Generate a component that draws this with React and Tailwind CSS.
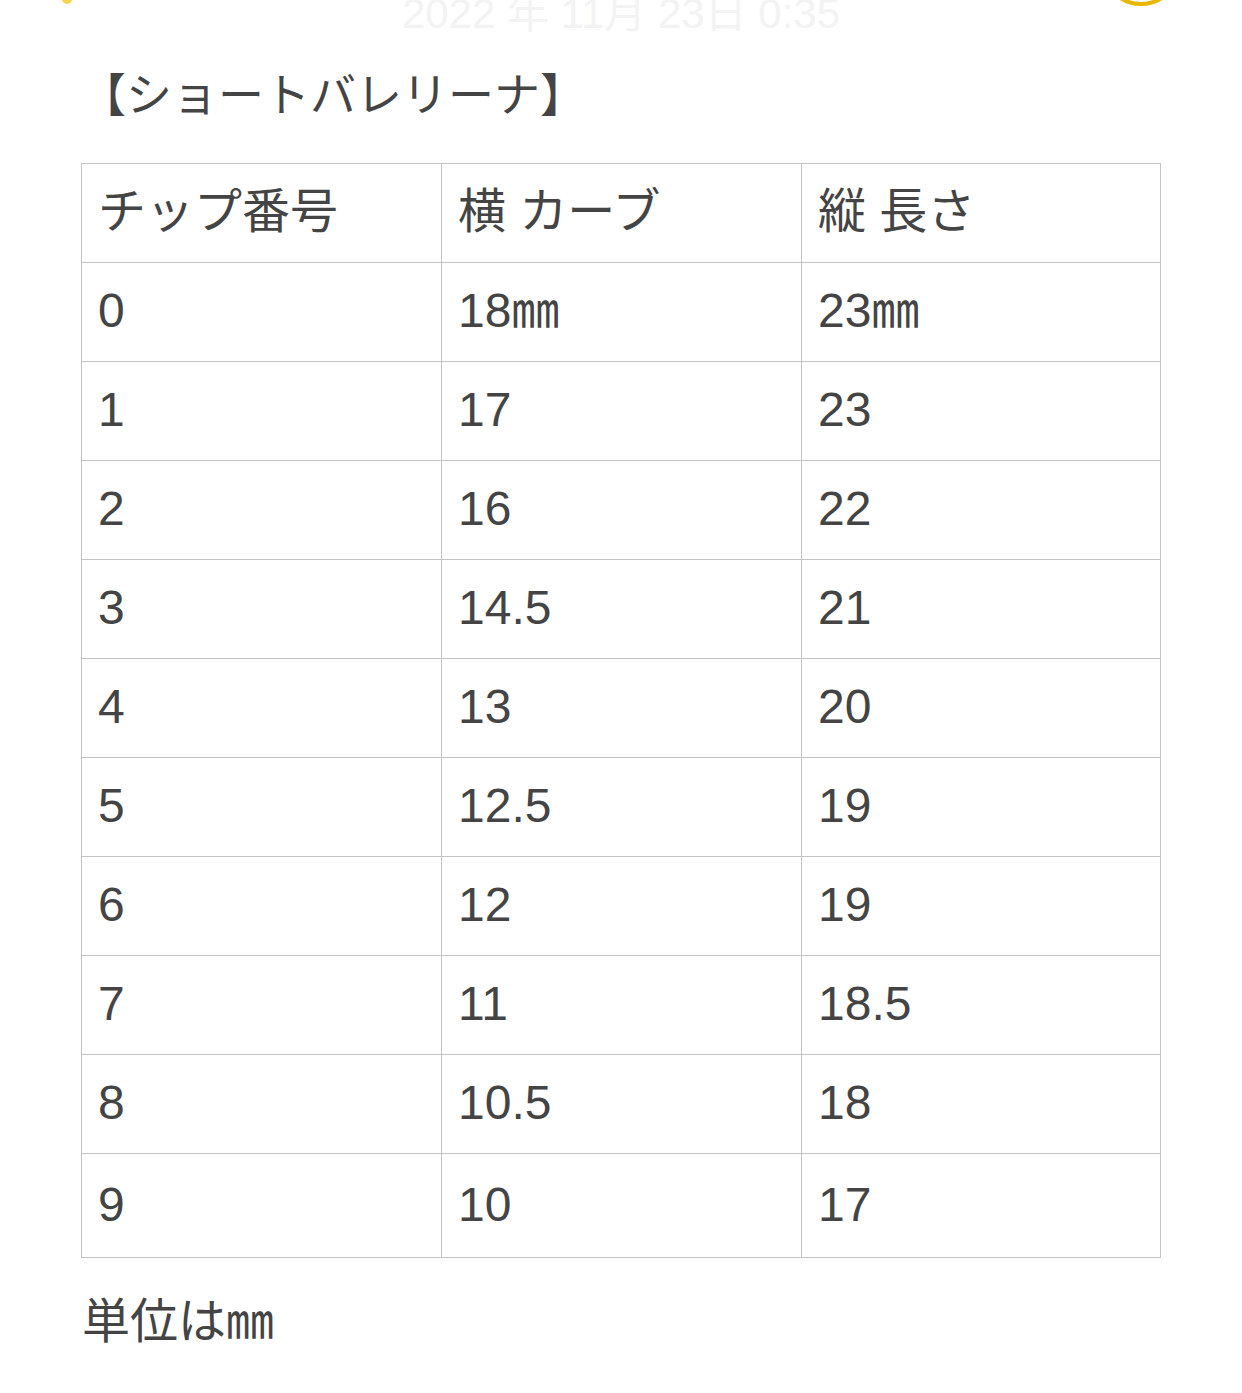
import React from "react";

const rows = [
  ["0", "18㎜", "23㎜"],
  ["1", "17", "23"],
  ["2", "16", "22"],
  ["3", "14.5", "21"],
  ["4", "13", "20"],
  ["5", "12.5", "19"],
  ["6", "12", "19"],
  ["7", "11", "18.5"],
  ["8", "10.5", "18"],
  ["9", "10", "17"],
];

export default function App() {
  const font = { fontFamily: '"Liberation Sans", "Noto Sans CJK JP", sans-serif' };
  return (
    <div className="w-[1242px] h-[1393px] bg-white text-[#444444] overflow-hidden" style={font}>
      <div className="relative h-[40px]">
        <div className="absolute left-[62px] top-[-6px] w-[10px] h-[10px] rounded-full bg-[#f2c300] opacity-70" />
        <div className="absolute left-[1101px] top-[-74px] w-[80px] h-[80px] rounded-full border-[4px] border-[#e8b800]" />
        <div className="text-center text-[42px] leading-[28px] text-[#f3f3f3]">
          2022 年 11月 23日 0:35
        </div>
      </div>
      <div className="pl-[80px] pt-[29px] text-[46px] leading-[52px]">【ショートバレリーナ】</div>
      <div className="pl-[81px] pt-[42px]">
        <table className="border-collapse w-[1080px] table-fixed text-[48px] leading-[56px]">
          <tbody>
            <tr className="h-[99px]">
              <td className="border border-[#c4c4c4] pl-[16px] w-[360px] pb-[2px]">チップ番号</td>
              <td className="border border-[#c4c4c4] pl-[16px] w-[360px] pb-[2px]">横 カーブ</td>
              <td className="border border-[#c4c4c4] pl-[16px] pb-[2px]">縦 長さ</td>
            </tr>
            {rows.map((r, i) => (
              <tr key={i} className={i === rows.length - 1 ? "h-[104px]" : "h-[99px]"}>
                {r.map((c, j) => (
                  <td key={j} className="border border-[#c4c4c4] pl-[16px] pb-[2px]">
                    {c}
                  </td>
                ))}
              </tr>
            ))}
          </tbody>
        </table>
      </div>
      <div className="pl-[82px] pt-[36px] text-[48px] leading-[56px]">単位は㎜</div>
    </div>
  );
}
